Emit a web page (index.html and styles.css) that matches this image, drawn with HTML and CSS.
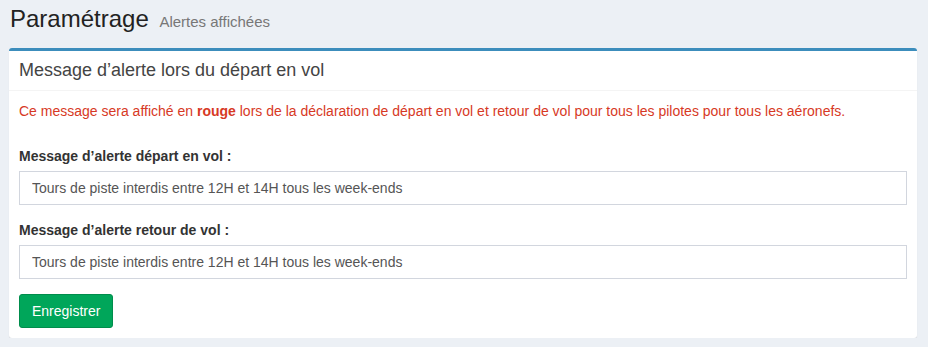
FILE: index.html
```html
<!DOCTYPE html>
<html lang="fr">
<head>
<meta charset="utf-8">
<title>Paramétrage</title>
<link rel="stylesheet" href="styles.css">
</head>
<body>
<section class="content-header">
  <h1>Paramétrage <small>Alertes affichées</small></h1>
</section>
<section class="content">
  <div class="box">
    <div class="box-header">
      <h3 class="box-title">Message d’alerte lors du départ en vol</h3>
    </div>
    <form class="box-body">
      <p class="text-red">Ce message sera affiché en <b>rouge</b> lors de la déclaration de départ en vol et retour de vol pour tous les pilotes pour tous les aéronefs.</p>
      <div class="form-group">
        <label class="label">Message d’alerte départ en vol :</label>
        <input class="form-control" type="text" value="Tours de piste interdis entre 12H et 14H tous les week-ends">
      </div>
      <div class="form-group">
        <label class="label">Message d’alerte retour de vol :</label>
        <input class="form-control" type="text" value="Tours de piste interdis entre 12H et 14H tous les week-ends">
      </div>
      <button class="btn" type="button">Enregistrer</button>
    </form>
  </div>
</section>
</body>
</html>
```
FILE: styles.css
```css
* { box-sizing: border-box; }
html, body { margin: 0; padding: 0; }
body {
  background: #ecf0f5;
  font-family: "Liberation Sans", Arial, sans-serif;
  font-size: 14px;
  line-height: 1.42857;
  color: #333;
}
.content-header {
  padding: 6px 10px 0 10px;
}
.content-header h1 {
  margin: 0;
  height: 26px;
  font-size: 24px;
  font-weight: 400;
  line-height: 26px;
  color: #222;
}
.content-header h1 small {
  font-size: 15px;
  line-height: 1;
  color: #777;
  padding-left: 4px;
  font-weight: 400;
}
.content {
  padding: 16px 11px 0 9px;
}
.box {
  background: #fff;
  border-top: 3px solid #3c8dbc;
  border-radius: 3px;
  box-shadow: 0 1px 1px rgba(0,0,0,0.1);
}
.box-header {
  padding: 10px;
  border-bottom: 1px solid #f4f4f4;
}
.box-title {
  margin: 0;
  font-size: 18px;
  font-weight: 400;
  line-height: 19px;
  color: #444;
}
.box-body {
  display: block;
  padding: 10px;
}
.text-red {
  margin: 0 0 25px 0;
  color: #d73925;
  font-size: 14px;
  line-height: 20px;
}
.text-red b { font-weight: 700; }
.form-group {
  margin-bottom: 15px;
}
.label {
  display: block;
  font-weight: 700;
  margin-bottom: 5px;
  font-size: 14px;
  line-height: 20px;
}
.form-control {
  display: block;
  width: 100%;
  height: 34px;
  padding: 6px 12px;
  font-family: inherit;
  font-size: 14px;
  color: #555;
  border: 1px solid #d2d6de;
  border-radius: 0;
  background: #fff;
  outline: none;
}
.btn {
  display: block;
  height: 34px;
  padding: 6px 12px;
  font-family: inherit;
  font-size: 14px;
  line-height: 20px;
  color: #fff;
  background: #00a65a;
  border: 1px solid #008d4c;
  border-radius: 3px;
}
```
